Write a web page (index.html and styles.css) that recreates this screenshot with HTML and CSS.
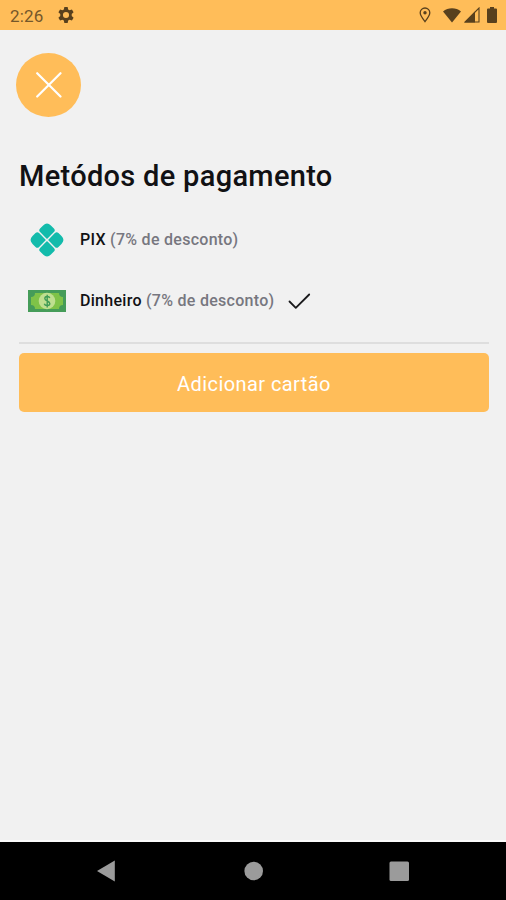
FILE: index.html
```html
<!DOCTYPE html>
<html lang="pt-BR">
<head>
<meta charset="utf-8">
<title>Metódos de pagamento</title>
<link rel="stylesheet" href="styles.css">
</head>
<body>
<div class="screen">
  <header class="status">
    <span class="time">2:26</span>
    <svg class="gear" width="16" height="16" viewBox="0 0 24 24"><path fill-rule="evenodd" d="M9.5 0h5l.7 3.6 2.2 1.3 3.500-1.2 2.500 4.3-2.800 2.500v3l2.800 2.500-2.500 4.300-3.500-1.200-2.200 1.300-.7 3.600h-5l-.7-3.600-2.200-1.300-3.500 1.200L.6 16l2.800-2.500v-3L.6 8l2.500-4.300 3.500 1.200 2.200-1.300zM12 7.400a4.600 4.600 0 1 0 0 9.200 4.600 4.600 0 0 0 0-9.200z"/></svg>
    <span class="spacer"></span>
    <svg class="pin" width="12" height="16" viewBox="0 0 12 16"><path d="M6 14.600C3.500 11.400 1.200 8.600 1.200 5.800a4.800 4.800 0 0 1 9.600 0C10.800 8.600 8.500 11.400 6 14.600z" fill="none" stroke="#58401d" stroke-width="1.300"/><circle cx="6" cy="5.800" r="1.700"/></svg>
    <svg class="wifi" width="18" height="15" viewBox="0 0 18 15"><path d="M0 3.500C5-.8 13-.8 18 3.500L9 14.500z"/></svg>
    <svg class="signal" width="16" height="16" viewBox="0 0 16 16"><path d="M15 1v14H1z" fill="none" stroke="#58401d" stroke-width="1.100"/><path d="M11 4.500V15.500H.5z"/></svg>
    <svg class="battery" width="10" height="16" viewBox="0 0 10 16"><path d="M3 0h4v1.500h2q1 0 1 1V15q0 1-1 1H1q-1 0-1-1V2.500q0-1 1-1h2z"/></svg>
  </header>
  <main class="content">
    <button class="close" aria-label="Fechar"><svg width="26" height="26" viewBox="0 0 26 26"><path d="M1.200 1.200 24.500 24.500M24.500 1.200 1.200 24.500"/></svg></button>
    <h1>Metódos de pagamento</h1>
    <div class="method">
      <svg class="logo" width="38" height="34" viewBox="0 0 38 34">
        <defs><path id="petal" d="M.7 1.500Q.7.7 1.500.7H10.500Q13 .7 13 3.200V7.500Q13 13 7.500 13H3.200Q.7 13 .7 10.500z"/></defs>
        <g transform="translate(19 17) rotate(45)" fill="#13bbab">
          <use href="#petal"/>
          <use href="#petal" transform="rotate(90)"/>
          <use href="#petal" transform="rotate(180)"/>
          <use href="#petal" transform="rotate(270)"/>
        </g>
      </svg>
      <p><b>PIX</b> (7% de desconto)</p>
    </div>
    <div class="method cash">
      <svg class="logo" width="38" height="22" viewBox="0 0 38 22">
        <path fill="#459c59" d="M0 0h38v22H0z"/><path fill="#7fc348" d="M7 3h24q0 4 4 4v8q-4 0-4 4H7q0-4-4-4V7q4 0 4-4z"/>
        <circle cx="19" cy="11" r="8.300" fill="#bfdf90"/>
        <path d="M21.800 8C21 5.700 16.800 6 16.800 8.500c0 3 5 2 5 5 0 2.700-4.700 3-5.500.2M19.200 4.700v12.800" fill="none" stroke="#409b55" stroke-width="1.400"/>
      </svg>
      <p><b>Dinheiro</b> (7% de desconto)</p>
      <svg class="check" width="23" height="17" viewBox="0 0 23 17"><path d="M1.500 8.500 7.800 14.800 21.200 1.500"/></svg>
    </div>
    <hr>
    <button class="add">Adicionar cartão</button>
  </main>
  <nav class="navbar">
    <svg width="506" height="58" viewBox="0 0 506 58" fill="#9b9b9b"><path d="M97 29 114.800 18.500V39.500z"/><circle cx="253.700" cy="29" r="9.300"/><rect x="389.500" y="19.500" width="19.500" height="19.500" rx="1.500"/></svg>
  </nav>
</div>
</body>
</html>
```
FILE: styles.css
```css
* { box-sizing: border-box; }
body { margin: 0; font-family: Roboto, sans-serif; }
.screen { width: 506px; height: 900px; display: flex; flex-direction: column; background: #f1f1f1; }
.status { height: 30px; padding: 0 9px 0 10px; display: flex; align-items: center; background: #ffbd59; fill: #58401d; }
.time { font-size: 17px; line-height: 30px; letter-spacing: .2px; color: #75572a; padding-top: 1px; width: 48px; }
.spacer { flex: 1; }
.pin { margin-right: 12px; }
.wifi { margin-right: 3px; }
.signal { margin-right: 7px; }
.content { flex: 1; padding: 23px 17px 0 19px; }
button { border: 0; padding: 0; font-family: inherit; }
.close { width: 65px; height: 64px; margin-left: -3px; border-radius: 50%; background: #ffbd59; display: flex; align-items: center; justify-content: center; }
.close svg { fill: none; stroke: #fff; stroke-width: 2.2; stroke-linecap: round; }
h1 { margin: 39px 0 0; height: 40px; font-size: 29px; line-height: 40px; font-weight: 500; letter-spacing: .31px; color: #111114; white-space: nowrap; }
.method { margin-top: 24px; height: 40px; display: flex; align-items: center; padding-left: 9px; }
.cash { margin-top: 21px; }
.method p { margin: 0 0 0 14px; font-size: 16px; font-weight: 500; line-height: 40px; letter-spacing: .28px; color: #77777f; white-space: nowrap; }
.method b { font-weight: 500; color: #111114; }
.check { margin-left: 14px; fill: none; stroke: #19191b; stroke-width: 1.8; stroke-linecap: round; stroke-linejoin: round; }
hr { border: 0; height: 2px; margin: 21px 0 9px; background: #dedede; }
.add { display: block; width: 470px; height: 59px; border-radius: 5px; background: #ffbd59; color: #fff; font-size: 20px; letter-spacing: .42px; padding-top: 3px; }
.navbar { height: 58px; background: #000; box-shadow: 0 -2px 0 #fbfbfb; }
.navbar svg { display: block; }
```
